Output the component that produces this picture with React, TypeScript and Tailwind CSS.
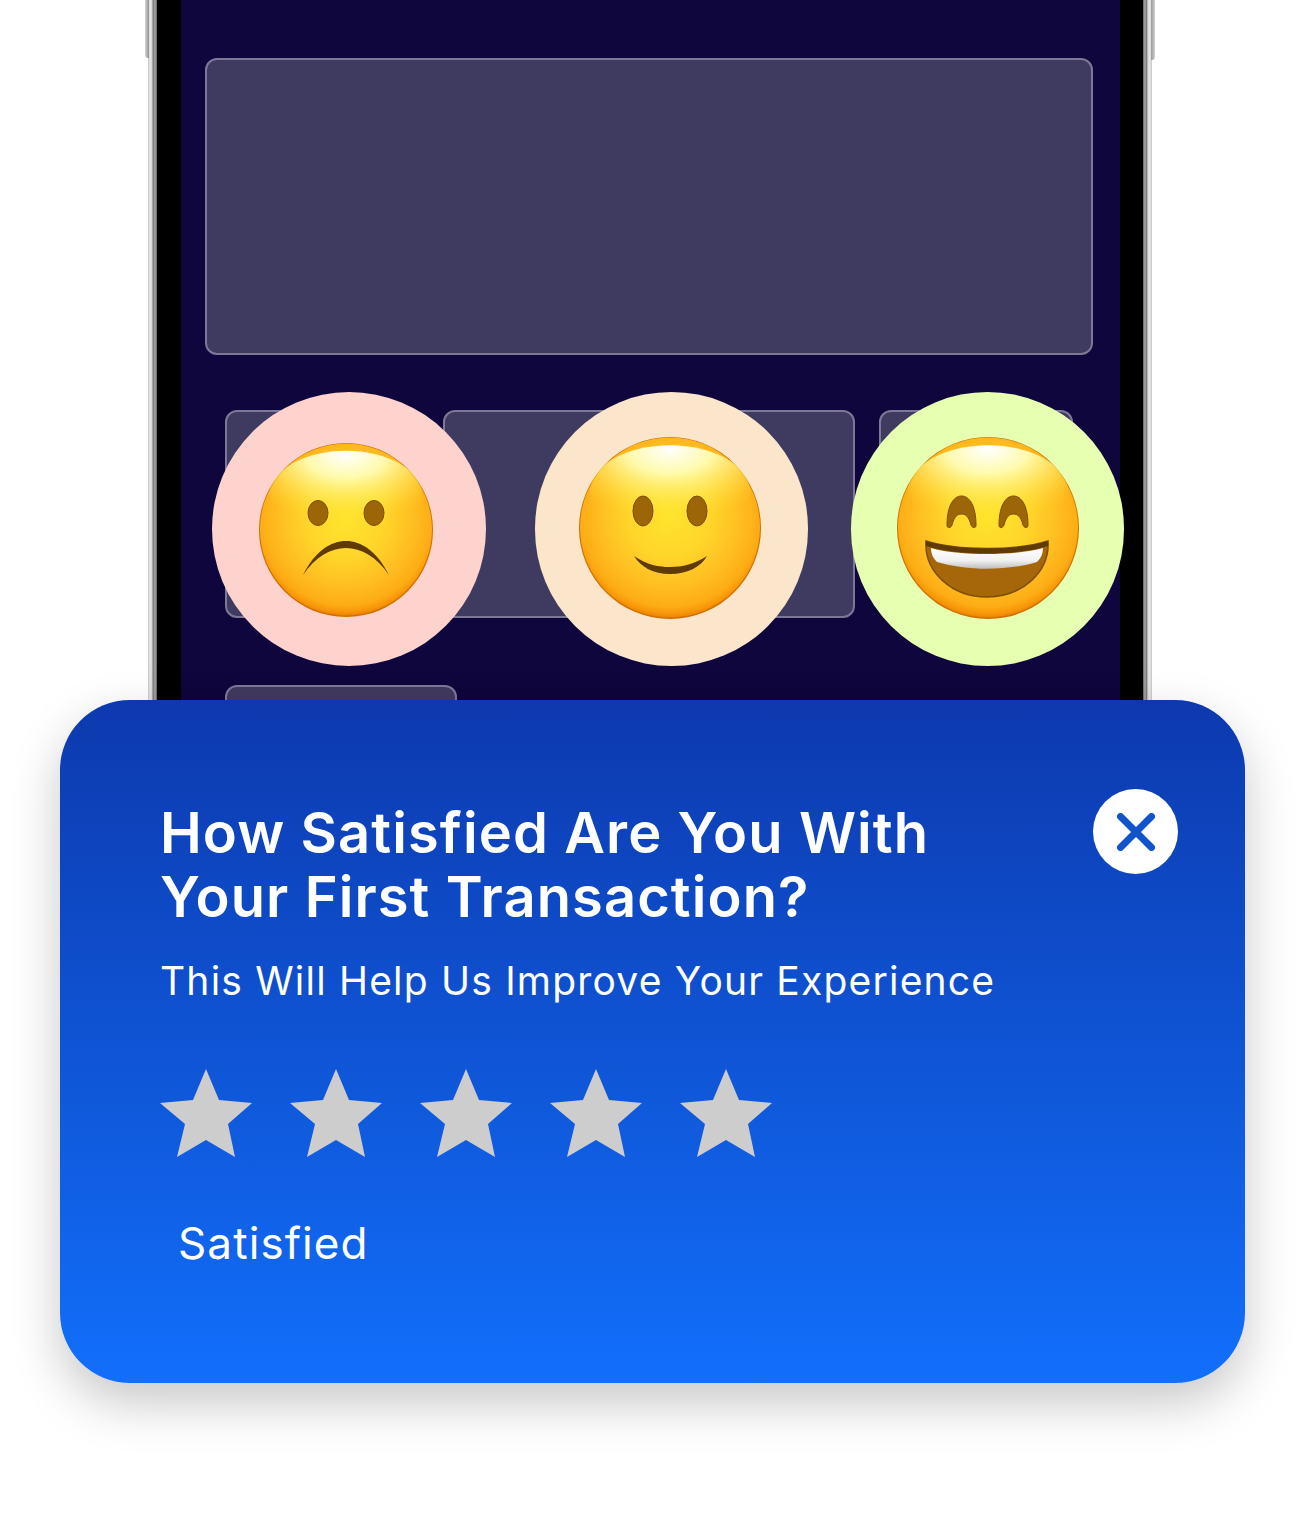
import React from "react";

function Face({ id, size, children }: { id: string; size: number; children: React.ReactNode }) {
  return (
    <svg width={size} height={size} viewBox={`0 0 ${size} ${size}`} className="block">
      <defs>
        <radialGradient id={`${id}-b`} cx="50%" cy="44%" r="57%">
          <stop offset="0%" stopColor="#ffe42c" />
          <stop offset="40%" stopColor="#ffd52a" />
          <stop offset="72%" stopColor="#ffbb20" />
          <stop offset="88%" stopColor="#fdac14" />
          <stop offset="95%" stopColor="#f79508" />
          <stop offset="100%" stopColor="#e07a00" />
        </radialGradient>
        <radialGradient id={`${id}-h`} cx="50%" cy="4%" r="75%">
          <stop offset="0%" stopColor="#ffffff" stopOpacity="1" />
          <stop offset="35%" stopColor="#fffdb4" stopOpacity="0.95" />
          <stop offset="70%" stopColor="#fff26a" stopOpacity="0.45" />
          <stop offset="100%" stopColor="#ffe62c" stopOpacity="0" />
        </radialGradient>
        <linearGradient id={`${id}-t`} x1="0" y1="0" x2="0" y2="1">
          <stop offset="0%" stopColor="#ffffff" />
          <stop offset="60%" stopColor="#f1f1f1" />
          <stop offset="100%" stopColor="#bdbdbd" />
        </linearGradient>
      </defs>
      <circle cx={size / 2} cy={size / 2} r={size / 2} fill="#cf7000" />
      <circle cx={size / 2} cy={size / 2 - 0.5} r={size / 2 - 1} fill={`url(#${id}-b)`} />
      <ellipse cx={size / 2} cy={size * 0.3} rx={size * 0.44} ry={size * 0.255} fill={`url(#${id}-h)`} />
      {children}
    </svg>
  );
}

function Sad() {
  return (
    <Face id="sad" size={174}>
      <ellipse cx="59" cy="70" rx="10" ry="12.5" fill="#9c6508" stroke="#7d4e04" strokeWidth="1" />
      <ellipse cx="115" cy="70" rx="10" ry="12.5" fill="#9c6508" stroke="#7d4e04" strokeWidth="1" />
      <path d="M44 132C56 108 72 98 87 98C102 98 118 108 130 132C118 114 102 105 87 105C72 105 56 114 44 132Z" fill="#5f3b03" />
    </Face>
  );
}

function Smile() {
  return (
    <Face id="smile" size={182}>
      <ellipse cx="64" cy="74" rx="10" ry="15" fill="#9c6508" stroke="#7d4e04" strokeWidth="1" />
      <ellipse cx="118" cy="74" rx="10" ry="15" fill="#9c6508" stroke="#7d4e04" strokeWidth="1" />
      <path d="M55 119C68 128 80 130 91 130C103 130 116 127 128 119C122 130 108 137 91 137C74 137 62 130 55 119Z" fill="#5f3b03" />
    </Face>
  );
}

function Grin() {
  const arch = (x: number) =>
    `M${x} 88C${x} 70 ${x + 6} 59 ${x + 14.5} 59C${x + 23} 59 ${x + 29} 70 ${x + 29} 88C${x + 29} 92 ${x + 25} 91 ${x + 24} 88C${x + 22} 80 ${x + 19} 77 ${x + 14.5} 77C${x + 10} 77 ${x + 7} 80 ${x + 5} 88C${x + 4} 91 ${x} 92 ${x} 88Z`;
  return (
    <Face id="grin" size={182}>
      <path d={arch(50)} fill="#9c6508" stroke="#7d4e04" strokeWidth="1" />
      <path d={arch(102)} fill="#9c6508" stroke="#7d4e04" strokeWidth="1" />
      <path d="M29 104C60 114 120 114 151 104C153 135 125 160 90 160C55 160 27 135 29 104Z" fill="#a5670a" stroke="#7d4e04" strokeWidth="1.5" />
      <path d="M29 104C60 114 120 114 151 104L151 109C120 119 60 119 29 109Z" fill="#5f3b03" />
      <path d="M34 111C60 119 120 119 146 111C146 118 143 122 140 125C110 134 70 134 40 125C37 122 34 118 34 111Z" fill="url(#grin-t)" />
    </Face>
  );
}

function Star() {
  return (
    <svg width="93" height="89" viewBox="0 0 93 89" className="block shrink-0">
      <polygon points="46,0 59,31 92,34 68,55 75,88 46,71 17,88 25,55 0,34 33,31" fill="#cdcdcd" />
    </svg>
  );
}

function Ghost({ className }: { className: string }) {
  return <div className={`rounded-[12px] border-[2.5px] border-[#7d7896] bg-[#3f3a5f] ${className}`} />;
}

export default function App() {
  return (
    <div className="h-[1520px] w-[1308px] overflow-hidden bg-white font-['Inter','Liberation_Sans',sans-serif] text-white">
      <div className="relative ml-[148px] flex h-[700px] w-[1004px]">
        <div className="absolute left-[-3px] top-0 h-[58px] w-[4px] rounded-bl-[3px] bg-gradient-to-r from-[#d8d8d8] to-[#8f8f8f]" />
        <div className="absolute right-[-3px] top-0 h-[60px] w-[4px] rounded-br-[3px] bg-gradient-to-r from-[#9a9a9a] to-[#d0d0d0]" />
        <div className="w-[9px] shrink-0 bg-[linear-gradient(to_right,#c4c4c4_0%,#e8e8e8_22%,#d8d8d8_40%,#7c7c7c_58%,#a8a8a8_78%,#5e5e5e_100%)]" />
        <div className="w-[24px] shrink-0 bg-black" />
        <div className="flex-1 bg-[#0e063c] pl-[24px] pr-[27px] pt-[58px]">
          <Ghost className="h-[297px] w-[888px]" />
          <div className="relative ml-[20px] mt-[55px] flex h-[208px] gap-[24px]">
            <Ghost className="w-[194px]" />
            <Ghost className="w-[412px]" />
            <Ghost className="w-[194px]" />
            <div className="absolute left-[-13px] top-[-18px] flex h-[274px] w-[274px] items-center justify-center rounded-full bg-[#fed3ce]">
              <div className="ml-[-6px] mt-[1px]">
                <Sad />
              </div>
            </div>
            <div className="absolute left-[310px] top-[-18px] flex h-[274px] w-[273px] items-center justify-center rounded-full bg-[#fce6cb]">
              <div className="ml-[-3px] mt-[-2px]">
                <Smile />
              </div>
            </div>
            <div className="absolute left-[626px] top-[-18px] flex h-[274px] w-[273px] items-center justify-center rounded-full bg-[#e6ffb1]">
              <div className="ml-[1px] mt-[-2px]">
                <Grin />
              </div>
            </div>
          </div>
          <Ghost className="ml-[20px] mt-[67px] h-[60px] w-[232px]" />
        </div>
        <div className="w-[23px] shrink-0 bg-black" />
        <div className="w-[9px] shrink-0 bg-[linear-gradient(to_right,#5e5e5e_0%,#a8a8a8_20%,#7c7c7c_40%,#d8d8d8_55%,#e8e8e8_75%,#c4c4c4_100%)]" />
      </div>
      <div className="relative ml-[60px] flex h-[683px] w-[1185px] items-start justify-between rounded-[70px] bg-gradient-to-b from-[#0d39ae] to-[#126ffb] pl-[100px] pr-[67px] pt-[89px] shadow-[0_20px_50px_rgba(0,0,0,0.22)]">
        <div>
          <h1 className="mt-[12px] text-[56px] font-semibold leading-[64px] tracking-[1.1px]">
            How Satisfied Are You With
            <br />
            Your First Transaction?
          </h1>
          <p className="mt-[28px] text-[39px] leading-[48px] tracking-[1.2px]">This Will Help Us Improve Your Experience</p>
          <div className="mt-[64px] flex gap-[37px]">
            <Star />
            <Star />
            <Star />
            <Star />
            <Star />
          </div>
          <p className="ml-[18px] mt-[58px] text-[44px] leading-[54px] tracking-[1.1px]">Satisfied</p>
        </div>
        <button className="flex h-[85px] w-[85px] shrink-0 items-center justify-center rounded-full bg-white">
          <svg width="38" height="38" viewBox="0 0 38 38" fill="none" stroke="#1254cc" strokeWidth="7" strokeLinecap="round">
            <path d="M3.5 3.5L34.5 34.5M34.5 3.5L3.5 34.5" />
          </svg>
        </button>
      </div>
    </div>
  );
}
